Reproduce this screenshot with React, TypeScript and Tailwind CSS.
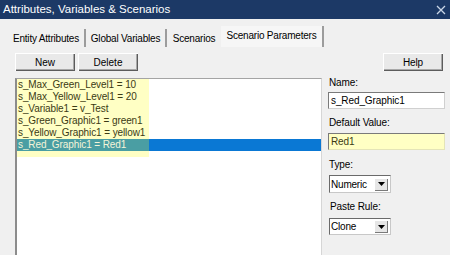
const rows = [
  "s_Max_Green_Level1 = 10",
  "s_Max_Yellow_Level1 = 20",
  "s_Variable1 = v_Test",
  "s_Green_Graphic1 = green1",
  "s_Yellow_Graphic1 = yellow1",
  "s_Red_Graphic1 = Red1",
];

const selectedIndex = 5;

function Button({ label, className = "" }: { label: string; className?: string }) {
  return (
    <div
      className={
        "w-[60px] h-[18px] flex items-center justify-center text-[10px] text-black bg-[#e9e9e9] shadow-[inset_1px_1px_0_#ffffff,inset_-1px_-1px_0_#5c5c5c,inset_-2px_-2px_0_#a8a8a8] " +
        className
      }
    >
      {label}
    </div>
  );
}

function Dropdown({ value, className = "" }: { value: string; className?: string }) {
  return (
    <div
      className={
        "ml-[7px] w-[62px] flex items-center bg-white border border-t-[#6a6a6a] border-l-[#6a6a6a] border-r-[#c8c8c8] border-b-[#c8c8c8] " +
        className
      }
    >
      <span className="flex-1 pl-[1px] text-[10px] tracking-[-0.2px] text-black">{value}</span>
      <div className="w-[14px] h-[13px] mr-[2px] flex items-center justify-center bg-[#e6e6e6] shadow-[inset_1px_1px_0_#ffffff,inset_-1px_-1px_0_#7a7a7a]">
        <svg width="7" height="4" viewBox="0 0 7 4">
          <path d="M0 0h7L3.5 4z" fill="#000" />
        </svg>
      </div>
    </div>
  );
}

export default function App() {
  return (
    <div className="w-[450px] h-[255px] overflow-hidden bg-[#f0f0f0] flex flex-col font-[Liberation_Sans,Arial,sans-serif]">
      {/* title bar */}
      <div className="h-[19px] shrink-0 bg-[#1c3966] flex items-center justify-between pl-[3px] pr-[3px]">
        <span className="text-[11.5px] text-white leading-none">Attributes, Variables &amp; Scenarios</span>
        <svg width="10" height="10" viewBox="0 0 10 10" className="mr-[1px]">
          <path d="M1 1l8 8M9 1l-8 8" stroke="#c9d5e6" strokeWidth="1.3" />
        </svg>
      </div>

      {/* tabs */}
      <div className="h-[28px] shrink-0 flex items-end pl-[8px] text-[10px] tracking-[-0.2px] text-black">
        <div className="w-[78px] h-[18px] flex items-center justify-center border-r-2 border-[#9c9c9c]">Entity Attributes</div>
        <div className="w-[81px] h-[18px] flex items-center justify-center border-r-2 border-[#9c9c9c]">Global Variables</div>
        <div className="w-[54px] h-[18px] flex items-center justify-center">Scenarios</div>
        <div className="w-[103px] h-[21px] pb-[2px] flex items-center justify-center border-r-2 border-[#9c9c9c] bg-[#f6f6f6]">
          Scenario Parameters
        </div>
      </div>

      <div className="flex flex-1 min-h-0">
        {/* left side */}
        <div className="w-[322px] shrink-0 pl-[15px] pt-[6px] flex flex-col">
          <div className="flex gap-[3px]">
            <Button label="New" />
            <Button label="Delete" />
          </div>
          <div className="mt-[7px] h-[200px] shrink-0 bg-white border-l-2 border-l-[#8c8c8c] border-t border-t-[#a4a4a4] border-r border-r-[#d6d6d6] text-[10px] tracking-[-0.1px]">
            {rows.map((r, i) => {
              const sel = i === selectedIndex;
              return (
                <div key={r} className={"flex h-[12px] " + (sel ? "bg-[#0a78d4]" : "")}>
                  <div
                    className={
                      "w-[132px] shrink-0 pl-[1px] leading-[12px] whitespace-nowrap " +
                      (sel ? "bg-[#4a9ea3] text-[#f4f4d8]" : "bg-[#ffffc4] text-[#3b3a14]")
                    }
                  >
                    {r}
                  </div>
                </div>
              );
            })}
            <div className="w-[132px] h-[6px] bg-[#ffffc4]" />
          </div>
        </div>

        {/* right side */}
        <div className="flex-1 pt-[6px] flex flex-col text-[10px] tracking-[-0.1px] text-black">
          <Button label="Help" className="self-end mr-[7px]" />
          <div className="mt-[6px] pl-[7px] leading-[12px]">Name:</div>
          <div className="mt-[3px] ml-[6px] w-[117px] h-[17px] flex items-center pl-[2px] bg-white border border-t-[#7a7a7a] border-l-[#7a7a7a] border-r-[#d0d0d0] border-b-[#d0d0d0]">
            s_Red_Graphic1
          </div>
          <div className="mt-[8px] pl-[7px] leading-[12px]">Default Value:</div>
          <div className="mt-[4px] ml-[6px] w-[117px] h-[17px] flex items-center pl-[2px] bg-[#ffffc4] border border-t-[#7a7a7a] border-l-[#7a7a7a] border-r-[#e4e4b8] border-b-[#e4e4b8] text-[#3b3a14]">
            Red1
          </div>
          <div className="mt-[9px] pl-[7px] leading-[12px]">Type:</div>
          <Dropdown value="Numeric" className="mt-[4px] h-[18px]" />
          <div className="mt-[8px] pl-[8px] leading-[12px]">Paste Rule:</div>
          <Dropdown value="Clone" className="mt-[5px] h-[17px]" />
        </div>
      </div>
    </div>
  );
}
